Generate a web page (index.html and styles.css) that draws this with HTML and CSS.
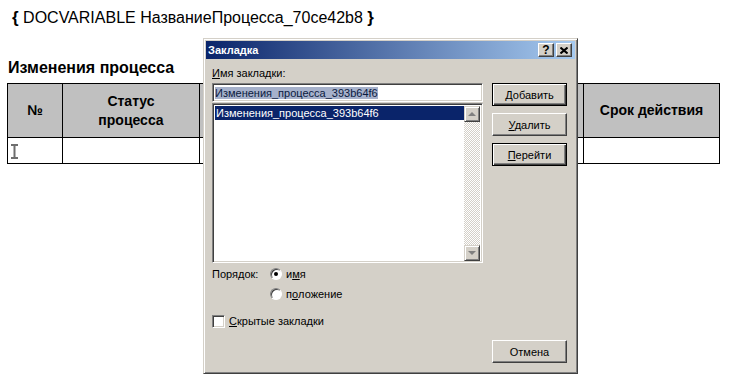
FILE: index.html
```html
<!DOCTYPE html>
<html lang="ru">
<head>
    <meta charset="UTF-8">
    <title>Закладка</title>
    <link rel="stylesheet" href="styles.css">
</head>
<body>
    <div class="page">
        <div class="field"><b>{</b> DOCVARIABLE НазваниеПроцесса_70ce42b8 <b>}</b></div>
        <h2>Изменения процесса</h2>
        <table class="changes">
            <thead>
                <tr>
                    <th class="c-num">№</th>
                    <th class="c-status">Статус<br>процесса</th>
                    <th class="c-mid"></th>
                    <th class="c-mid"></th>
                    <th class="c-mid"></th>
                    <th class="c-term">Срок действия</th>
                </tr>
            </thead>
            <tbody>
                <tr>
                    <td>
                        <svg class="ibeam" width="7" height="15" viewBox="0 0 7 15">
                            <path d="M0 1h7M0 14h7M3.5 1v13" stroke="#6e6e6e" stroke-width="2" fill="none"/>
                        </svg>
                    </td>
                    <td></td><td></td><td></td><td></td><td></td>
                </tr>
            </tbody>
        </table>
    </div>

    <div class="dialog">
        <div class="caption">
            <span class="caption-title">Закладка</span>
            <div class="caption-btns">
                <span class="cap-btn">?</span>
                <span class="cap-btn">
                    <svg width="8" height="7" viewBox="0 0 8 7">
                        <path d="M0.5 0.5l7 6M7.5 0.5l-7 6" stroke="#000" stroke-width="2" fill="none"/>
                    </svg>
                </span>
            </div>
        </div>
        <div class="dlg-body">
            <div class="dlg-left">
                <div class="label"><u>И</u>мя закладки:</div>
                <div class="textbox"><span class="sel">Изменения_процесса_393b64f6</span></div>
                <div class="listbox">
                    <div class="items">
                        <div class="item selected">Изменения_процесса_393b64f6</div>
                    </div>
                    <div class="scrollbar">
                        <span class="sb-btn"><i class="arrow up"></i></span>
                        <span class="sb-track"></span>
                        <span class="sb-btn"><i class="arrow down"></i></span>
                    </div>
                </div>
                <div class="order">
                    <span class="order-label">Порядок:</span>
                    <div class="radios">
                        <div class="radio-row"><span class="radio checked"></span>и<u>м</u>я</div>
                        <div class="radio-row"><span class="radio"></span>п<u>о</u>ложение</div>
                    </div>
                </div>
                <div class="check-row"><span class="checkbox"></span><u>С</u>крытые закладки</div>
            </div>
            <div class="dlg-right">
                <button class="btn default"><u>Д</u>обавить</button>
                <button class="btn"><u>У</u>далить</button>
                <button class="btn default"><u>П</u>ерейти</button>
                <button class="btn cancel">Отмена</button>
            </div>
        </div>
    </div>
</body>
</html>
```

FILE: styles.css
```css
body {
    margin: 0;
    background-color: #fff;
    font-family: "Liberation Sans", Arial, sans-serif;
    color: #000;
}
.page {
    padding: 8px 0 0 7px;
}
.field {
    font-size: 16px;
    line-height: 20px;
    padding-left: 5px;
}
.field b {
    font-size: 17px;
}
h2 {
    font-size: 16px;
    font-weight: bold;
    margin: 30px 0 5px 1px;
    line-height: 20px;
}
.changes {
    border-collapse: collapse;
    width: 712px;
    table-layout: fixed;
}
.changes th, .changes td {
    border: 1px solid #000;
    padding: 0;
}
.changes th {
    background-color: #c0c0c0;
    font-size: 14px;
    height: 53px;
    line-height: 19px;
    text-align: center;
    vertical-align: middle;
}
.changes td {
    height: 25px;
    vertical-align: middle;
}
.c-num { width: 54px; }
.c-status { width: 136px; }
.c-mid { width: 127px; }
.c-term { width: 135px; }
.ibeam {
    display: block;
    margin: 2px 0 0 3px;
}

/* окно "Закладка" */
.dialog {
    position: absolute;
    left: 203px;
    top: 38px;
    width: 369px;
    height: 330px;
    background-color: #d4d0c8;
    border: 1px solid;
    border-color: #d4d0c8 #404040 #404040 #d4d0c8;
    box-shadow: inset 1px 1px #fff, inset -1px -1px #808080;
    padding: 2px;
    font-size: 11px;
    line-height: 14px;
}
.caption {
    height: 18px;
    background: linear-gradient(to right, #0a246a, #a6caf0);
    display: flex;
    align-items: center;
    justify-content: space-between;
    padding: 0 3px 0 2px;
}
.caption-title {
    color: #fff;
    font-weight: bold;
}
.caption-btns {
    display: flex;
    gap: 2px;
}
.cap-btn {
    width: 14px;
    height: 12px;
    background-color: #d4d0c8;
    border: 1px solid;
    border-color: #fff #404040 #404040 #fff;
    box-shadow: inset -1px -1px #808080;
    display: flex;
    align-items: center;
    justify-content: center;
    font-weight: bold;
    font-size: 12px;
    line-height: 12px;
}
.dlg-body {
    display: grid;
    grid-template-columns: 271px 75px;
    column-gap: 9px;
    padding: 7px 6px 0 6px;
    height: 303px;
}
.dlg-left {
    display: flex;
    flex-direction: column;
}
.label {
    height: 14px;
    margin-bottom: 3px;
}
.textbox {
    height: 15px;
    background-color: #fff;
    border: 1px solid;
    border-color: #808080 #fff #fff #808080;
    box-shadow: inset 1px 1px #404040, inset -1px -1px #d4d0c8;
    padding: 2px 2px 0 2px;
    line-height: 14px;
}
.sel {
    background-color: #a6b1cb;
    color: #0a1a40;
}
.listbox {
    margin-top: 1px;
    height: 155px;
    background-color: #fff;
    border: 1px solid;
    border-color: #808080 #fff #fff #808080;
    box-shadow: inset 1px 1px #404040, inset -1px -1px #d4d0c8;
    padding: 2px 2px 1px 2px;
    display: flex;
}
.items {
    flex: 1;
}
.item {
    height: 14px;
    padding-left: 1px;
}
.item.selected {
    background-color: #0a246a;
    color: #fff;
}
.scrollbar {
    width: 16px;
    display: flex;
    flex-direction: column;
}
.sb-btn {
    height: 14px;
    background-color: #d4d0c8;
    border: 1px solid;
    border-color: #d4d0c8 #404040 #404040 #d4d0c8;
    box-shadow: inset 1px 1px #fff, inset -1px -1px #808080;
    display: flex;
    align-items: center;
    justify-content: center;
    box-sizing: content-box;
    width: 14px;
}
.sb-track {
    flex: 1;
    background: repeating-conic-gradient(#d4d0c8 0 25%, #fff 0 50%) 0 0 / 2px 2px;
}
.arrow {
    width: 0;
    height: 0;
    border-left: 4px solid transparent;
    border-right: 4px solid transparent;
}
.arrow.up {
    border-bottom: 4px solid #808080;
}
.arrow.down {
    border-top: 4px solid #808080;
}
.order {
    display: flex;
    margin-top: 4px;
}
.order-label {
    width: 58px;
    line-height: 14px;
}
.radios {
    display: flex;
    flex-direction: column;
    gap: 6px;
}
.radio-row, .check-row {
    display: flex;
    align-items: center;
    height: 14px;
}
.radio {
    width: 10px;
    height: 10px;
    border-radius: 50%;
    background-color: #fff;
    border: 1px solid;
    border-color: #808080 #fff #fff #808080;
    box-shadow: inset 1px 1px #404040;
    margin-right: 4px;
    position: relative;
}
.radio.checked::after {
    content: "";
    position: absolute;
    left: 3px;
    top: 3px;
    width: 4px;
    height: 4px;
    border-radius: 50%;
    background-color: #000;
}
.check-row {
    margin-top: 13px;
}
.checkbox {
    width: 11px;
    height: 11px;
    background-color: #fff;
    border: 1px solid;
    border-color: #808080 #fff #fff #808080;
    box-shadow: inset 1px 1px #404040, inset -1px -1px #d4d0c8;
    margin-right: 4px;
}
.dlg-right {
    display: flex;
    flex-direction: column;
    gap: 7px;
    padding-top: 17px;
}
.btn {
    width: 75px;
    height: 23px;
    margin: 0;
    padding: 0;
    font-family: "Liberation Sans", Arial, sans-serif;
    font-size: 11px;
    color: #000;
    background-color: #d4d0c8;
    border: 1px solid;
    border-color: #fff #404040 #404040 #fff;
    box-shadow: inset -1px -1px #808080;
}
.btn.default {
    border-color: #000;
    box-shadow: inset 1px 1px #fff, inset -1px -1px #404040, inset -2px -2px #808080;
}
.btn.cancel {
    margin-top: auto;
    margin-bottom: 6px;
}
```
